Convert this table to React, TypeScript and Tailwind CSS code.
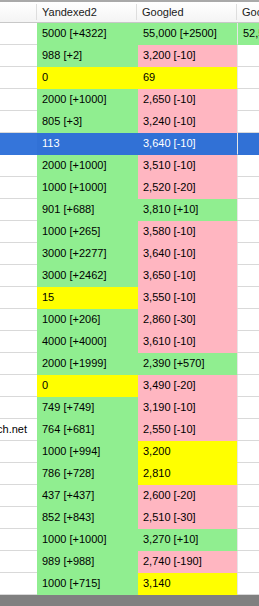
import React from "react";

type Tone = "g" | "p" | "y" | "w";

const rows: { name?: string; yan: [string, Tone]; goo: [string, Tone]; extra?: [string, Tone] }[] = [
  { yan: ["5000 [+4322]", "g"], goo: ["55,000 [+2500]", "g"], extra: ["52,500 [+2500]", "g"] },
  { yan: ["988 [+2]", "g"], goo: ["3,200 [-10]", "p"] },
  { yan: ["0", "y"], goo: ["69", "y"] },
  { yan: ["2000 [+1000]", "g"], goo: ["2,650 [-10]", "p"] },
  { yan: ["805 [+3]", "g"], goo: ["3,240 [-10]", "p"] },
  { yan: ["113", "g"], goo: ["3,640 [-10]", "p"] },
  { yan: ["2000 [+1000]", "g"], goo: ["3,510 [-10]", "p"] },
  { yan: ["1000 [+1000]", "g"], goo: ["2,520 [-20]", "p"] },
  { yan: ["901 [+688]", "g"], goo: ["3,810 [+10]", "g"] },
  { yan: ["1000 [+265]", "g"], goo: ["3,580 [-10]", "p"] },
  { yan: ["3000 [+2277]", "g"], goo: ["3,640 [-10]", "p"] },
  { yan: ["3000 [+2462]", "g"], goo: ["3,650 [-10]", "p"] },
  { yan: ["15", "y"], goo: ["3,550 [-10]", "p"] },
  { yan: ["1000 [+206]", "g"], goo: ["2,860 [-30]", "p"] },
  { yan: ["4000 [+4000]", "g"], goo: ["3,610 [-10]", "p"] },
  { yan: ["2000 [+1999]", "g"], goo: ["2,390 [+570]", "g"] },
  { yan: ["0", "y"], goo: ["3,490 [-20]", "p"] },
  { yan: ["749 [+749]", "g"], goo: ["3,190 [-10]", "p"] },
  { name: "websearch.net", yan: ["764 [+681]", "g"], goo: ["2,550 [-10]", "p"] },
  { yan: ["1000 [+994]", "g"], goo: ["3,200", "y"] },
  { yan: ["786 [+728]", "g"], goo: ["2,810", "y"] },
  { yan: ["437 [+437]", "g"], goo: ["2,600 [-20]", "p"] },
  { yan: ["852 [+843]", "g"], goo: ["2,510 [-30]", "p"] },
  { yan: ["1000 [+1000]", "g"], goo: ["3,270 [+10]", "g"] },
  { yan: ["989 [+988]", "g"], goo: ["2,740 [-190]", "p"] },
  { yan: ["1000 [+715]", "g"], goo: ["3,140", "y"] },
];

const SELECTED = 5;

const toneClass: Record<Tone, string> = {
  g: "bg-[#90ee90] border-b-[#90ee90]",
  p: "bg-[#ffb6c1] border-b-[#ffb6c1]",
  y: "bg-[#ffff00] border-b-[#ffff00]",
  w: "bg-white border-b-[#d9d9d9]",
};

function Cell({ text, tone, sel, w }: { text: string; tone: Tone; sel: boolean; w: string }) {
  const look = sel ? "bg-[#3171d6] border-b-[#3171d6] text-white" : toneClass[tone] + " text-black";
  return (
    <div className={`${w} h-[22px] shrink-0 border-b pl-[5px] flex items-center whitespace-nowrap overflow-hidden ${look}`}>
      {text}
    </div>
  );
}

export default function App() {
  return (
    <div className="w-[259px] h-[606px] overflow-hidden bg-white text-[11px] leading-none flex flex-col" style={{ fontFamily: '"Liberation Sans", Arial, sans-serif' }}>
      <div className="h-[23px] shrink-0 flex border-t-2 border-t-[#a9a9a9] border-b border-b-[#c8c8c8] bg-gradient-to-b from-white to-[#f4f4f4] text-[#1a1a1a]">
        <div className="w-[37px] shrink-0 border-r border-r-[#dedede] my-[2px]" />
        <div className="w-[100px] shrink-0 border-r border-r-[#dedede] my-[2px] pl-[5px] flex items-center">Yandexed2</div>
        <div className="w-[100px] shrink-0 border-r border-r-[#dedede] my-[2px] pl-[5px] flex items-center">Googled</div>
        <div className="flex-1 pl-[5px] flex items-center whitespace-nowrap overflow-hidden">Googled2</div>
      </div>
      {rows.map((r, i) => {
        const sel = i === SELECTED;
        return (
          <div key={i} className="flex h-[22px] shrink-0">
            <div className={`w-[37px] shrink-0 h-[22px] border-b flex items-center justify-end pr-[10px] whitespace-nowrap overflow-hidden ${sel ? "bg-[#3575da] border-b-[#3575da] text-white" : "bg-white border-b-[#d9d9d9] text-black"}`}>
              {r.name ?? ""}
            </div>
            <Cell w="w-[101px]" text={r.yan[0]} tone={r.yan[1]} sel={sel} />
            <Cell w="w-[100px] border-r border-r-[#e6e6e6]" text={r.goo[0]} tone={r.goo[1]} sel={sel} />
            <Cell w="flex-1" text={r.extra ? r.extra[0] : ""} tone={r.extra ? r.extra[1] : "w"} sel={sel} />
          </div>
        );
      })}
      <div className="flex-1 bg-[#808080]" />
    </div>
  );
}
